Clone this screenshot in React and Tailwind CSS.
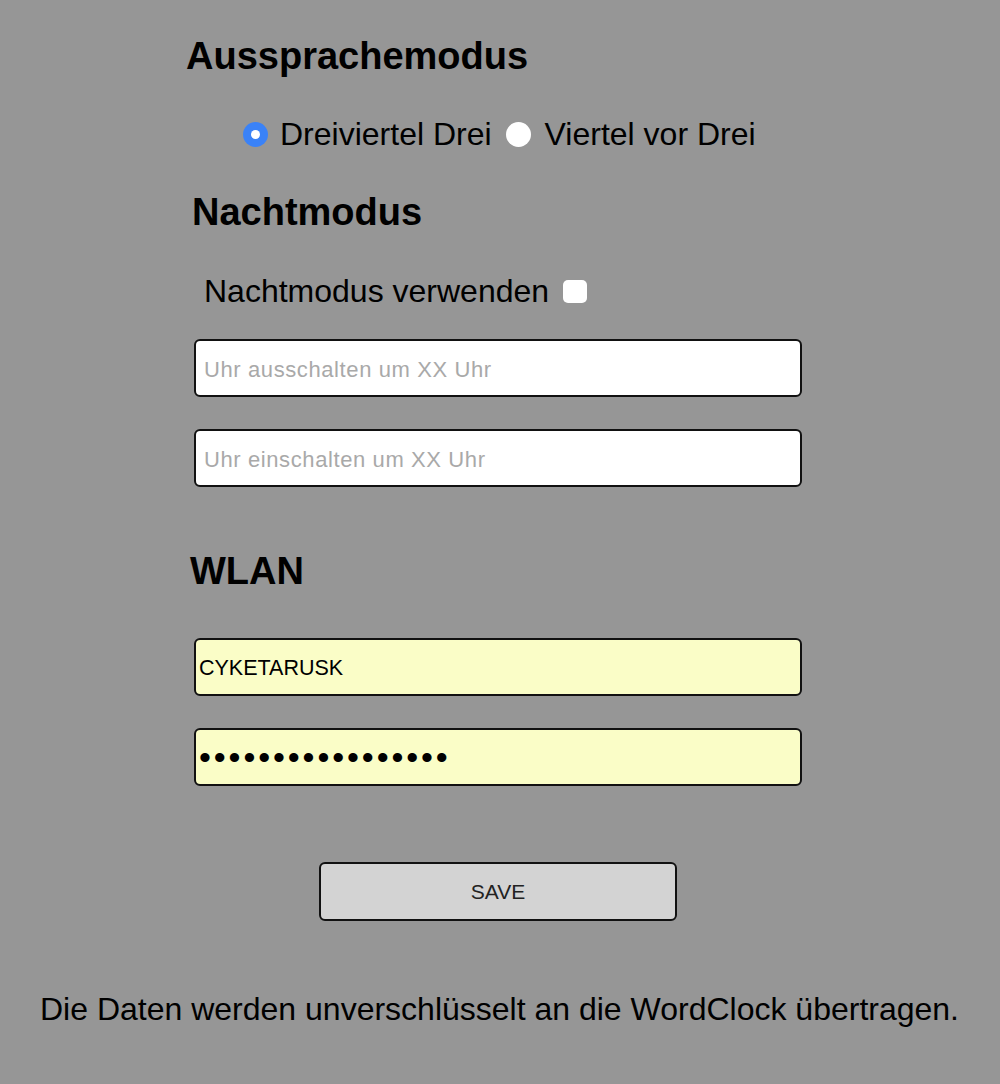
import React from 'react';

const FIELD =
  "block w-[608px] h-[58px] ml-[194px] border-2 border-[#111] rounded-[6px] outline-none font-['Liberation_Sans',Arial,sans-serif]";

function Radio({ checked, className = '' }) {
  return checked ? (
    <span className={`flex items-center justify-center w-[25px] h-[25px] rounded-full bg-[#3a82f7] shrink-0 ${className}`}>
      <span className="w-[9px] h-[9px] rounded-full bg-white" />
    </span>
  ) : (
    <span className={`block w-[25px] h-[25px] rounded-full bg-white shrink-0 ${className}`} />
  );
}

export default function App() {
  return (
    <div className="min-h-[1084px] w-full bg-[#969696] text-black font-['Liberation_Sans',Arial,sans-serif]">
      <div className="flex flex-col pt-[35px] pb-[30px]">
        {/* Aussprachemodus */}
        <h3 className="ml-[186px] text-[38px] font-bold leading-[43px]">Aussprachemodus</h3>
        <div className="mt-[38px] ml-[243px] flex items-center text-[32px] leading-[37px]">
          <Radio checked />
          <span className="ml-[12px]">Dreiviertel Drei</span>
          <Radio className="ml-[14px]" />
          <span className="ml-[14px]">Viertel vor Drei</span>
        </div>

        {/* Nachtmodus */}
        <h3 className="mt-[38px] ml-[192px] text-[38px] font-bold leading-[43px]">Nachtmodus</h3>
        <div className="mt-[39px] ml-[204px] flex items-center text-[32px] leading-[37px]">
          <span>Nachtmodus verwenden</span>
          <span className="ml-[14px] w-[24px] h-[23px] rounded-[5px] bg-white" />
        </div>
        <input
          readOnly
          placeholder="Uhr ausschalten um XX Uhr"
          className={`${FIELD} mt-[29px] bg-white pl-[8px] pt-[3px] text-[22px] tracking-[0.6px] placeholder:text-[#a9a9a9]`}
        />
        <input
          readOnly
          placeholder="Uhr einschalten um XX Uhr"
          className={`${FIELD} mt-[32px] bg-white pl-[8px] pt-[3px] text-[22px] tracking-[0.6px] placeholder:text-[#a9a9a9]`}
        />

        {/* WLAN */}
        <h3 className="mt-[63px] ml-[190px] text-[38px] font-bold leading-[43px]">WLAN</h3>
        <input
          readOnly
          value="CYKETARUSK"
          className={`${FIELD} mt-[45px] bg-[#fafdc7] pl-[3px] pt-[2px] text-[21.5px] text-black`}
        />
        <input
          readOnly
          value={'•'.repeat(17)}
          className={`${FIELD} mt-[32px] bg-[#fafdc7] pl-[3px] text-[34px] tracking-[2.9px] text-black`}
        />

        <button className="mt-[76px] ml-[319px] w-[358px] h-[59px] rounded-[6px] border-2 border-[#111] bg-[#d3d3d3] text-[21px] text-[#222] font-['Liberation_Sans',Arial,sans-serif]">
          SAVE
        </button>

        <p className="mt-[70px] ml-[40px] text-[32px] leading-[37px]">
          Die Daten werden unverschlüsselt an die WordClock übertragen.
        </p>
      </div>
    </div>
  );
}
